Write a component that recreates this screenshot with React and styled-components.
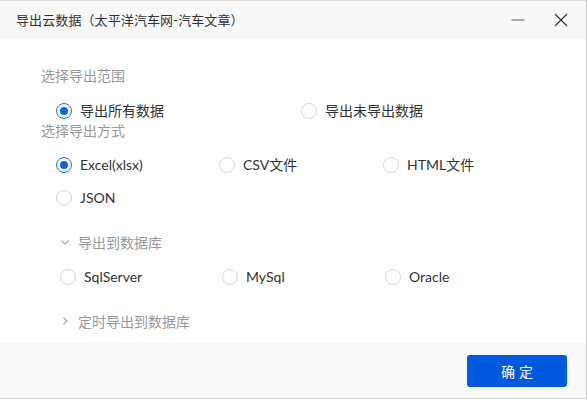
import React, {useState} from 'react';
import styled, {createGlobalStyle} from 'styled-components';

const GlobalStyle = createGlobalStyle`
  html, body {
    margin: 0;
    padding: 0;
    background: #ffffff;
  }
  body {
    font-family: Lato, "Noto Sans CJK SC", sans-serif;
    color: #333;
  }
`;

const Dialog = styled.div`
  width: 587px;
  height: 399px;
  box-sizing: border-box;
  display: flex;
  flex-direction: column;
  border-top: 1px solid #dedede;
  border-right: 1px solid #d4d4d4;
  border-bottom: 1px solid #d4d4d4;
  background: #fff;
`;

const Header = styled.div`
  height: 38px;
  flex: none;
  display: flex;
  align-items: center;
  padding-left: 16px;
  background: #f8f8f8;
`;

const Title = styled.div`
  flex: 1;
  font-size: 13px;
  line-height: 18px;
  margin-top: -1px;
  color: #333;
  letter-spacing: 0.1px;
`;

const HeaderButton = styled.button`
  width: 30px;
  height: 30px;
  margin-right: ${props => props.$gap}px;
  padding: 0;
  border: none;
  background: none;
  display: flex;
  align-items: center;
  justify-content: center;
  cursor: pointer;
`;

const Body = styled.div`
  flex: 1;
  padding: 27px 0 0 41px;
  display: flex;
  flex-direction: column;
`;

const SectionLabel = styled.div`
  font-size: 14px;
  line-height: 20px;
  color: #999;
  margin-top: ${props => props.$top || 0}px;
`;

const RadioGrid = styled.div`
  display: grid;
  grid-template-columns: ${props => props.$columns};
  row-gap: 13px;
  padding-left: ${props => props.$indent}px;
  margin-top: ${props => props.$top}px;
`;

const RadioItem = styled.label`
  display: flex;
  align-items: center;
  gap: 8px;
  height: 20px;
  font-size: 14px;
  color: #333;
  cursor: pointer;
  white-space: nowrap;
`;

const RadioCircle = styled.span`
  width: 16px;
  height: 16px;
  box-sizing: border-box;
  border-radius: 50%;
  border: 1px solid ${props => (props.$checked ? '#1a6ee8' : '#d9d9d9')};
  display: flex;
  align-items: center;
  justify-content: center;
  flex: none;
  margin-top: 1px;

  &::after {
    content: '';
    width: 8px;
    height: 8px;
    border-radius: 50%;
    background: #0f63e6;
    display: ${props => (props.$checked ? 'block' : 'none')};
  }
`;

const Collapse = styled.div`
  display: flex;
  align-items: center;
  gap: 7px;
  height: 20px;
  padding-left: 18px;
  font-size: 14px;
  color: #999;
  cursor: pointer;
  margin-top: ${props => props.$top}px;
`;

const Footer = styled.div`
  height: 55px;
  flex: none;
  display: flex;
  align-items: center;
  justify-content: flex-end;
  padding-right: 19px;
  background: #f9f9f9;
`;

const PrimaryButton = styled.button`
  width: 100px;
  height: 32px;
  border: none;
  border-radius: 3px;
  background: #005ae0;
  color: #fff;
  font-family: "Noto Sans CJK SC", sans-serif;
  font-size: 14px;
  letter-spacing: 4px;
  text-indent: 4px;
  cursor: pointer;
`;

const Radio = ({label, checked, onSelect}) => (
  <RadioItem onClick={onSelect}>
    <RadioCircle $checked={checked} />
    <span>{label}</span>
  </RadioItem>
);

const Chevron = ({open}) => (
  <svg width="12" height="12" viewBox="0 0 12 12" fill="none">
    {open ? (
      <path d="M2.5 4.5 L6 8 L9.5 4.5" stroke="#a6a6a6" strokeWidth="1.1" />
    ) : (
      <path d="M4.5 2.5 L8 6 L4.5 9.5" stroke="#a6a6a6" strokeWidth="1.1" />
    )}
  </svg>
);

const RANGES = ['导出所有数据', '导出未导出数据'];
const FORMATS = ['Excel(xlsx)', 'CSV文件', 'HTML文件', 'JSON'];
const DATABASES = ['SqlServer', 'MySql', 'Oracle'];

export default function App() {
  const [range, setRange] = useState(RANGES[0]);
  const [format, setFormat] = useState(FORMATS[0]);
  const [db, setDb] = useState(null);

  return (
    <>
      <GlobalStyle />
      <Dialog>
        <Header>
          <Title>导出云数据（太平洋汽车网-汽车文章）</Title>
          <HeaderButton $gap={13} aria-label="minimize">
            <svg width="14" height="14" viewBox="0 0 14 14">
              <path d="M0.5 7 H13.5" stroke="#888" strokeWidth="1.4" />
            </svg>
          </HeaderButton>
          <HeaderButton $gap={10} aria-label="close">
            <svg width="14" height="14" viewBox="0 0 14 14">
              <path d="M1 1 L13 13 M13 1 L1 13" stroke="#333" strokeWidth="1.2" />
            </svg>
          </HeaderButton>
        </Header>

        <Body>
          <SectionLabel>选择导出范围</SectionLabel>
          <RadioGrid $columns="245px 200px" $indent={15} $top={14}>
            {RANGES.map(r => (
              <Radio key={r} label={r} checked={range === r} onSelect={() => setRange(r)} />
            ))}
          </RadioGrid>

          <SectionLabel $top={1}>选择导出方式</SectionLabel>
          <RadioGrid $columns="163px 164px 150px" $indent={15} $top={13}>
            {FORMATS.map(f => (
              <Radio key={f} label={f} checked={format === f} onSelect={() => setFormat(f)} />
            ))}
          </RadioGrid>

          <Collapse $top={25}>
            <Chevron open />
            <span>导出到数据库</span>
          </Collapse>
          <RadioGrid $columns="162px 163px 150px" $indent={19} $top={14}>
            {DATABASES.map(d => (
              <Radio key={d} label={d} checked={db === d} onSelect={() => setDb(d)} />
            ))}
          </RadioGrid>

          <Collapse $top={25}>
            <Chevron />
            <span>定时导出到数据库</span>
          </Collapse>
        </Body>

        <Footer>
          <PrimaryButton>确定</PrimaryButton>
        </Footer>
      </Dialog>
    </>
  );
}
